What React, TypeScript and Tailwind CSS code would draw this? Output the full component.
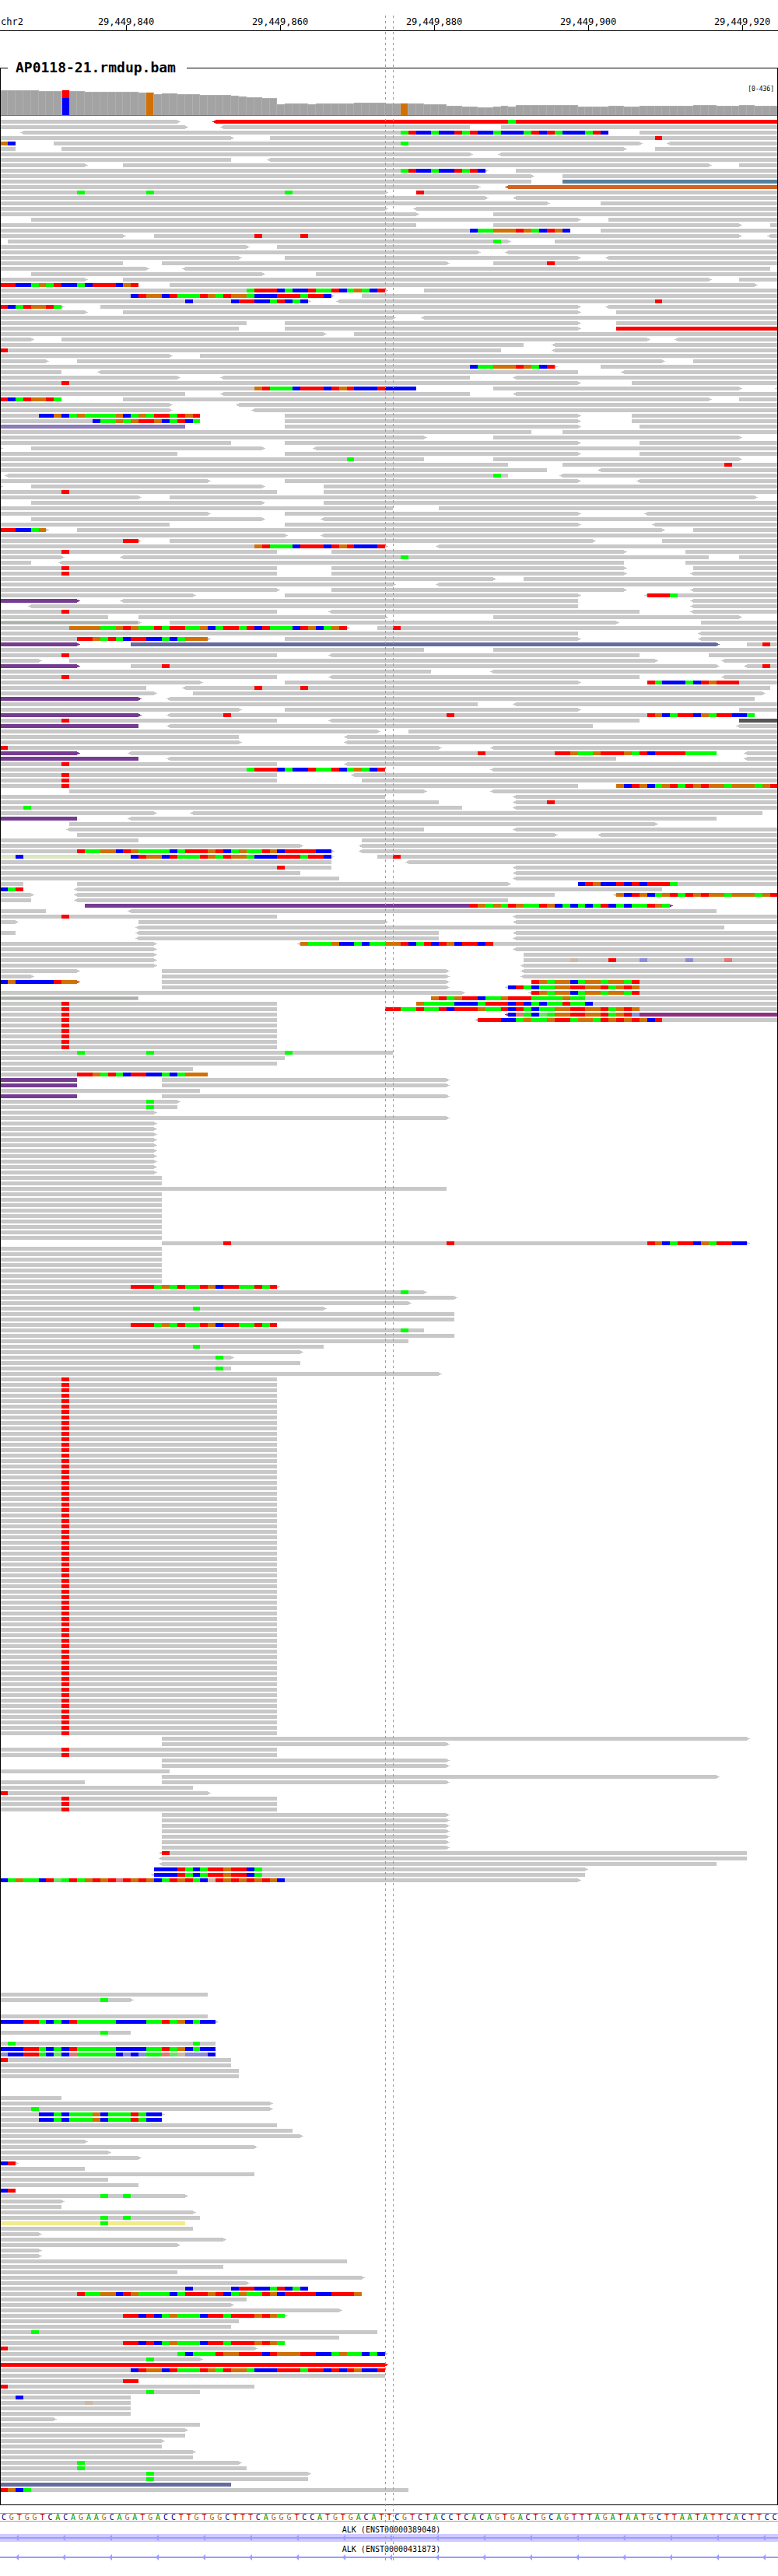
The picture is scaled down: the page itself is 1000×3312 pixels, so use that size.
import React from "react";

const BASES = 101;
const ROW_PITCH = 7;
const READ_HEIGHT = 5;

const xOf = (base: number) => Math.round((base * 1000) / BASES);

const BASE_COLORS: Record<string, string> = {
  A: "#00ff00",
  C: "#0000ff",
  G: "#d17105",
  T: "#ff0000",
  a: "#64e664",
  c: "#8c8cdb",
  g: "#cdb8a2",
  t: "#e07878",
};

const READ_COLORS: Record<string, string> = {
  "": "#c8c8c8",
  r: "#ff0000",
  s: "#56809a",
  o: "#d06424",
  v: "#8b7bb8",
  p: "#763c91",
  b: "#666c9e",
  g: "#c8c8c8",
  k: "#555555",
  y: "#dbe6c2",
  e: "#f3eb8b",
  m: "#902f82",
};

/*
 * One line per pileup row. "a-b" is a read from base a to base b, with "<" or
 * ">" for its strand and a letter for its colour; "nSEQ" lists the mismatched
 * bases that start at n; a leading "Nx" repeats the row.
 */
const PILEUP = `0-23> <28-101r 66A
0-24> <29-61 65-101
<3-79 83-101 52ATCCACCTATCCACCCATCTACCCATC
0-30> 35-101 85T
0-2 0GC 7-83> <87-101 52A
0-2 8-81> 85-101
0-61> <65-101
0-30 <35-101
0-11> 16-92> 96-101
0-63> 67-101 52ATCCACCTATC
0-69> 73-101
0-69 73-101s
0-62> <66-101o
0-50> 54-101 10A 19A 37A 54T
0-63> <67-101
0-71> 78-101
0-50> <54-101
0-54> 64-101
4-75> 79-101
0-54 64-96> 100-101
0-74 61CAAGGGTGACTGC 78-101
0-16> 20-96> <100-101 33T 39T
1-66> 72-101 64A
0-32> 36-101
0-62> <66-101
0-31> 37-75> <79-101
0-16 21-58> 64-101 71T
0-19> <24-100
4-34> 41-101
0-11> 16-92> 96-101
0-18 0TTCCAGATCCACTTTCGT 22-98>
0-50> 32ATTTCACCTAATCAGACT 55-101
0-43> 17CTGGCTAAATGATGGACCCTTTATTC 47-101
0-40> 24C 30CTTCCATCAC <44-101 85T
0-8> 0TCATGGTA 13-75> <79-101
0-11> 16-75> 80-101
0-51> <55-101
0-32 37-75> 80-101
0-31 37-75> 80-101r
0-42> 46-101
0-4> 8-84> <88-101
0-68 <72-101
0-65 <72-101 0T
0-22> 26-101
0-6> 10-86> 90-101
0-72> 61CAAGGGTGACT 78-101
0-8 <13-75 <81-101
0-23> <29-61 <67-101
0-75> 82-101 8T
0-54 33GTAAACTTTCTGTCCCTCCCC 64-96> <101-101
0-24 <29-61 <67-101
0-8 0TCATGGTA 16-92> 96-101
0-22> <31-101
0-22> <33-101
0-26 5CCGCAGAAAAGCAGATTATGT 37-75> 82-101
0-26 12CAAGAGTTGCATCA 37-75> 82-101
0-24v 37-75> 83-101
0-69 73-101
0-55> 64-96>
0-30 37-75> 83-101
0-0> 4-34> <41-101
0-23 37-75> 83-101
0-55 64-96> 45A
0-66 73-101 94T
0-71 <78-101
<1-66 <73-101 64A
0-27> 37-75> <83-101
0-0> 4-34> 42-101
0-36 42-101 8T
0-18> 22-98>
4-34> 42-101
0-51 57-101
0-27> 37-75> <84-101
4-34> <42-101
0-22 37-75> <85-101
0-6> 0TTCCAG 10-86> 90-101
0-37> <42-101
0-18> 16TT 22-77> 86-101
0-50> 33GTAAACTTTCTGTCCCT <57-101
0-36 8T 43-81> 89-101
0-8> <16-92 96-101 52A
0-4 <8-81 89-101
0-36 8T 43-81> 90-101
0-36 8T 43-81> <90-101
0-64> 68-101
0-51> <57-101
0-36> 43-81> <90-101
0-25> 37-75> <84-101 84TTTA
0-10>p <16-75 <90-101
<4-75 <90-101
0-36 8T <43-83 <90-101
0-14 18-50> 64-96>
0-18>g 22-80> 91-101
0-45> 9GGGGAAGTGAATATTAAGCATTATCTAAACTGCAGT 49-101 51T
0-75 <91-101
0-27> 10TTGATACTTCCACAGGG 37-75> <91-101
0-10>p 17-93>b 97-101 99T
0-55 64-101
0-36 8T <43-83 92-101
0-5> 9-85> <94-101
0-10>p 17-93> <97-101 21T 99T
0-56 <64-101
0-36 8T <43-83 <94-101
0-26> 37-75> 84-101 84TACCCACTGTTT
0-19 <24-100 33T 39T
0-20> 25-99>
0-18>p <22-98
0-62 <67-101
0-31> 37-75> 96-101
0-18>p <22-98 29T 58T 84TGCATTCGATTCCA
0-36 8T <43-83 96-101k
0-18p <22-77 <96-101
0-49> 53-101
0-31 <45-101
0-31> <45-101
0-57> <64-101 0T
0-10>p <17-93 62T 72TTGAAGTTTGATCTTTTAAAA <97-101
0-18p <22-80 <97-101
0-36 8T <45-101
0-50 32ATTTCACCTAATCAGACT <64-101
0-36 8T <46-101
0-36 8T 47-101
0-75 8T 80-101 80GCTGCAGTATGTGGAGGGAGT
9-55> <64-101
0-50 <67-101
0-57 <67-101 71T
0-60 <67-101 3A
0-20> <25-99
0-10p <17-93
9-85>
<9-55 <67-101
10-72> <78-101
0-18 47-101
0-39> <47-101
0-43> 10TAAGGCTGAAAACATTTGTCAGAATGCTTTTCC <47-101
0-43>y 2C 17CTGGCTAAATGATGGACCCTTTATTC 49-101 51T
0-43 <53-101
0-43 36T <67-101
0-39 <67-101
0-44 <67-101
0-3 10-66> 75-101 75CTGCCTCTCTTTA
0-3 0CAT <10-86
0-4> <10-72 <80-101 80GCTGCAGTATGTGGAGGGAGT
0-4 <10-66
11-87>p 61TGAGATGAATGCACACATCACAATGA
0-6 <17-93
0-36 8T <67-101
0-2> 18-50> <67-101
<18-94
0-2 <18-57 <67-101
<18-57 <67-101
0-20> <39-101 39GAAAGCCACAAGGTCATCTGCTTCT
0-20> <67-101
0-20> 68-101
0-20> 68-101 74g 79T 83c 89c 94t
0-20> <68-101
0-10> 21-58> <68-101
0-4> 21-58> <68-101
0-10>o 0CGCCCCCTGG 21-58> 69-101 69TGAGGCAGGAGGAT
21-58> <66-101 66CTACAAGGTTGGTAGTG
0-60> <69-101 69TGAGGCAGGAGGAT
0-18g 56-101 56GTAGTTCAAGTTTAAAAGAA
0-36 8T 54-101 54GAAAACCCATTTCTCACAATAAC
0-36 8T 50-101 50TTAATAATCTTTGAATCTACAAGGTTGGTAGTG
0-36 8T <66-101m 66CtACaAGGTTGGTAGTc
0-36 8T <62-101 62TTTCCAGAAGTTAGGATGTGTGCT
5x 0-36 8T
0-51 10A 19A 37A
0-37
0-36
0-25
0-27 10TTGATACTTCCACAGGG
2x 0-10p 21-58>
0-26
0-10p 21-58>
0-23> 19A
0-23 19A
0-20>
0-58>
10x 0-20>
2x 0-21
0-58
9x 0-21
21-97> 29T 58T 84TGCATTCGATTCC
7x 0-21
0-36> 17TTTAGATAATGCTTAATAT
0-55> 52A
0-59>
0-53>
0-42> 25A
2x 0-59
0-36 17TTTAGATAATGCTTAATAT
0-55 52A
0-59
0-53
0-42 25A
0-39>
0-30> 28A
0-39
0-30 28A
0-57>
66x 0-36 8T
21-97>
21-58>
2x 0-36 8T
2x 21-58>
0-22
21-93>
0-11 21-58>
0-25
0-27> 0T
3x 0-36 8T
7x 21-58>
<21-97 21T
<21-97
<21-93
20-76> 20CCCTACATTGTTCA
<20-76 20CCCTACATTGTTCA
0-75> 0CAGAACTaATAGTGTtTGTGCATGTACgTGTGTGTGC
20x
0-27
0-17> 13A
2x
0-27
0-28> 0CCCTTACACTAAAAACCCCAATAGCACC
1x
0-17 13A
1x
0-28 1A 25A
0-28 0CCCTTACACTAAAAACCCCAATAGCACC
0-28 0cCCTTACaCtAAAAACcCcAAtagcccC
0-30 0T
0-30
2x 0-31
3x
0-8
0-35>
0-35> 4A
0-21> 5CCACAAAGCAAATACC
0-21 5CCACAAAGCAAATACC
0-36
0-38
0-39>
0-11>
0-33>
0-14>
0-18>
0-2> 0CT
0-11
0-33
0-14
0-18
0-2 0CT
0-24> 13A 16A
0-8>
0-8
0-25>
0-26 13A 16A
0-24e 13A
0-25
0-5>
0-29>
0-23>
0-5>
0-5>
0-45
0-29
0-23
0-47>
0-32>
0-40 24C 30CTTCCATCAC
0-47 10TAAGGCTGAAAACATTTGTCAGAATGCTTTTCCTTTG
0-32
0-30>
0-44>
0-37> 16TTCTCAGAAACTTATTTGTGA
0-31
0-30
0-49 4A
0-44
0-37 16TTCTCAGAAACTTATTTGTGA
0-33> 0T
0-50> 23ACAAATGGTTTCTGGGTTCCAGAACAC
0-26> 19A
0-50>r
0-50 17CTGGCTAAATGATGGACCCTTTATTCTCTGCCT
0-50
0-18 16TT
0-33 0T
0-26 19A
0-17 2C
0-17 11g
2x 0-17
0-7>
0-26
0-24>
0-24
0-21>
0-21
0-25>
0-25
0-31> 10A
0-32 10A
0-40> 19A
0-40 19A
0-30b
0-53 0TGCA`;

const rows: string[] = PILEUP.split("\n").flatMap((line) => {
  const m = line.match(/^(\d+)x\s*(.*)$/);
  return m ? Array<string>(Number(m[1])).fill(m[2]) : [line];
});

function Row({ spec, y }: { spec: string; y: number }) {
  const reads: React.ReactElement[] = [];
  const marks: React.ReactElement[] = [];
  spec.split(" ").forEach((token, k) => {
    const read = token.match(/^(<?)(\d+)-(\d+)(>?)([a-z]?)$/);
    if (read) {
      const x0 = xOf(Number(read[2]));
      const x1 = xOf(Number(read[3]));
      const shape =
        `M${x0} ${y}H${x1}` +
        (read[4] ? `v1h2v1h2v1h-2v1h-2v1` : `v${READ_HEIGHT}`) +
        `H${x0}` +
        (read[1] ? `v-1h-2v-1h-2v-1h2v-1h2z` : "z");
      reads.push(<path key={k} d={shape} fill={READ_COLORS[read[5]]} />);
      if (read[5] === "g") {
        reads.push(
          <rect key={`${k}i`} x={x0} y={y + 1} width={x1 - x0 - 1} height={3} fill="#a9b1a8" />
        );
      }
      return;
    }
    const bases = token.match(/^(\d+)([ACGTacgt]+)$/);
    if (bases) {
      const start = Number(bases[1]);
      bases[2].split("").forEach((letter, i) => {
        const x = xOf(start + i);
        marks.push(
          <rect
            key={`${k}-${i}`}
            x={x}
            y={y}
            width={xOf(start + i + 1) - x}
            height={READ_HEIGHT}
            fill={BASE_COLORS[letter]}
          />
        );
      });
    }
  });
  return (
    <g>
      {reads}
      {marks}
    </g>
  );
}

/* [number of bases, column height] */
const COVERAGE: [number, number][] = [
  [5, 32], [6, 31], [7, 30], [2, 29], [1, 27], [2, 28], [3, 27], [4, 26],
  [1, 25], [1, 24], [2, 23], [2, 22], [1, 14], [3, 15], [1, 14], [5, 15],
  [4, 16], [5, 15], [3, 14], [2, 12], [2, 11], [2, 10], [1, 11], [1, 12],
  [1, 11], [8, 13], [4, 11], [2, 12], [2, 11], [7, 12], [3, 13], [3, 12],
  [2, 13], [3, 12],
];

const heights = COVERAGE.flatMap(([n, h]) => Array<number>(n).fill(h));

function Coverage() {
  return (
    <svg viewBox="0 0 1000 33" className="-mt-1 block w-full" shapeRendering="crispEdges" role="img" aria-label="Coverage">
      {heights.map((h, i) => {
        const x = xOf(i);
        const w = xOf(i + 1) - x;
        if (i === 8) {
          return (
            <g key={i}>
              <rect x={x} y={1} width={w} height={31} fill="#b0b0b0" />
              <rect x={x + 1} y={0} width={w - 1} height={10} fill="#ff0000" />
              <rect x={x + 1} y={10} width={w - 1} height={22} fill="#0000ff" />
            </g>
          );
        }
        const variant = i === 19 || i === 52;
        return (
          <g key={i}>
            <rect x={x} y={32 - h} width={w} height={h} fill="#b0b0b0" />
            <rect
              x={x}
              y={variant ? 32 - h : 33 - h}
              width={w - 1}
              height={variant ? h : h - 1}
              fill={variant ? "#d17105" : "#a3a3a3"}
            />
            {variant && <rect x={x + 4} y={32 - h} width={1} height={1} fill="#00ff00" />}
          </g>
        );
      })}
      <rect x={0} y={32} width={1000} height={1} fill="#777777" />
    </svg>
  );
}

const SEQUENCE =
  "CGTGGTCACAGAAGCAGATGACCTTGTGGCTTTCAGGGTCCATGTGACATTCGTCTACCTCACAGTGACTGCAGTTTAGATAATGCTTAATATTCACTTCC";

const LETTER_CLASSES: Record<string, string> = {
  A: "text-[#009600]",
  C: "text-[#000080]",
  G: "text-[#b06a10]",
  T: "text-[#b00000]",
};

const TICKS = ["29,449,840", "29,449,860", "29,449,880", "29,449,900", "29,449,920"];

function Gene({ name, highlighted }: { name: string; highlighted: boolean }) {
  const arrows = Array.from({ length: 17 }, (_, i) => 20 + i * 60);
  return (
    <div className="mt-[5px]">
      <div className="pl-1.5 text-center text-[10px] leading-[10px]">{name}</div>
      <svg
        viewBox="0 0 1000 10"
        className={highlighted ? "block w-full bg-[#d0caff]" : "block w-full"}
        aria-hidden="true"
      >
        <rect x={0} y={4} width={1000} height={2} fill="#9c9cff" />
        {arrows.map((x) => (
          <path key={x} d={`M${x} 5L${x + 4} 1V9Z`} fill="#9c9cff" />
        ))}
      </svg>
    </div>
  );
}

export default function App() {
  return (
    <main className="relative w-full overflow-hidden bg-white pb-[19px] font-['DejaVu_Sans_Mono',monospace] text-black">
      <header className="flex h-10 overflow-hidden border-b border-black text-[12px] leading-[12px]">
        <div className="w-[6.3%] shrink-0 pt-[22px] pl-px">chr2</div>
        {TICKS.map((label) => (
          <div key={label} className="flex w-[19.8%] shrink-0 flex-col items-center pt-[22px]">
            <span>{label}</span>
            <span className="-mt-0.5 h-2 w-px bg-black" />
          </div>
        ))}
      </header>

      <section aria-labelledby="track-title">
        <div className="mt-[37px] flex h-5 items-center">
          <span className="h-px w-2.5 bg-black" />
          <h1 id="track-title" className="w-[230px] px-2.5 text-[18px] leading-5 font-bold whitespace-nowrap">
            AP0118-21.rmdup.bam
          </h1>
          <span className="h-px flex-1 bg-black" />
        </div>
        <div className="relative -mt-2.5 pt-[23px] pb-[15px]">
          <div className="pr-[5px] text-right text-[8px] leading-[10px]">[0-436]</div>
          <Coverage />
          <svg
            viewBox={`0 0 1000 ${rows.length * ROW_PITCH}`}
            className="mt-[5px] block w-full"
            shapeRendering="crispEdges"
            role="img"
            aria-label="Aligned reads"
          >
            {rows.map((spec, i) => (
              <Row key={i} spec={spec} y={i * ROW_PITCH} />
            ))}
          </svg>
          <div className="pointer-events-none absolute inset-0 border-x border-b border-black" />
        </div>
      </section>

      <div className="mt-2.5 mb-1.5 flex border-y border-[#a0a0a0] text-[10px] leading-[9px]">
        {SEQUENCE.split("").map((letter, i) => (
          <span key={i} className={`flex w-0 flex-1 justify-center ${LETTER_CLASSES[letter]}`}>
            {letter}
          </span>
        ))}
      </div>

      <Gene name="ALK (ENST00000389048)" highlighted />
      <Gene name="ALK (ENST00000431873)" highlighted={false} />

      <div className="pointer-events-none absolute top-5 bottom-5 left-[49.5%] w-px bg-[repeating-linear-gradient(to_bottom,#999999_0_3px,transparent_3px_7px)]" />
      <div className="pointer-events-none absolute top-5 bottom-5 left-[50.5%] w-px bg-[repeating-linear-gradient(to_bottom,#999999_0_3px,transparent_3px_7px)]" />
    </main>
  );
}
